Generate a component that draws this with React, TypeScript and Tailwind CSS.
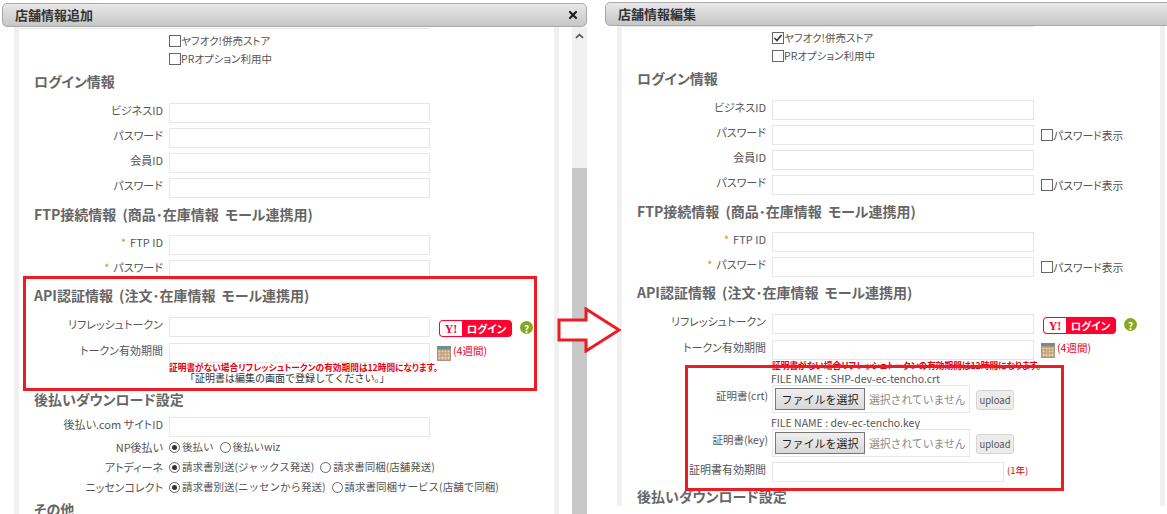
import { ReactNode } from 'react';
import { X } from 'lucide-react';

const INK = 'text-[#555]';

function TitleBar({ title, closable }: { title: string; closable?: boolean }) {
  return (
    <div className="flex h-[24px] shrink-0 items-center justify-between rounded-[5px] border border-[#aaa] bg-gradient-to-b from-[#e8e8e8] to-[#c6c6c6] pl-[12px] pr-[7px]">
      <span className="text-[13px] font-bold text-[#333] [font-feature-settings:normal]">{title}</span>
      {closable && <X size={12} strokeWidth={4.5} className="text-[#222]" />}
    </div>
  );
}

function Heading({ children, className }: { children: ReactNode; className: string }) {
  return (
    <div className={`flex items-center pb-[2px] pl-[15px] text-[14px] font-bold [word-spacing:3px] whitespace-nowrap text-[#666] ${className}`}>
      {children}
    </div>
  );
}

function Box({ checked }: { checked?: boolean }) {
  return (
    <span className="relative inline-block h-[12px] w-[12px] shrink-0 border border-[#666] bg-white">
      {checked && (
        <svg viewBox="0 0 10 10" className="absolute inset-0 h-[10px] w-[10px]">
          <path d="M1.5 5 L4 7.5 L8.5 2" fill="none" stroke="#333" strokeWidth="1.6" />
        </svg>
      )}
    </span>
  );
}

function Radio({ on }: { on?: boolean }) {
  return (
    <span className="grid h-[11px] w-[11px] shrink-0 place-items-center rounded-full border border-[#666] bg-white">
      {on && <span className="h-[5px] w-[5px] rounded-full bg-[#333]" />}
    </span>
  );
}

function Check({ label, checked }: { label: string; checked?: boolean }) {
  return (
    <label className={`flex h-[18px] items-center pl-[150px] text-[10.5px] ${INK}`}>
      <Box checked={checked} />
      {label}
    </label>
  );
}

function Field({ width, className }: { width: string; className?: string }) {
  return <input readOnly className={`h-[20px] shrink-0 border border-[#e6e6e6] bg-white ${width} ${className ?? ''}`} />;
}

function Row({
  label,
  star,
  width,
  height = 'h-[25px]',
  children,
}: {
  label: string;
  star?: boolean;
  width: string;
  height?: string;
  children?: ReactNode;
}) {
  return (
    <div className={`flex items-start ${height}`}>
      <span className={`w-[144px] shrink-0 text-right text-[11px] leading-[15px] whitespace-nowrap ${INK}`}>
        {star && <span className="mr-[4px] text-[#f08a00]">*</span>}
        {label}
      </span>
      <Field width={width} className="ml-[6px]" />
      {children}
    </div>
  );
}

function RadioRow({ label, options }: { label: string; options: string[] }) {
  return (
    <div className={`flex h-[20px] items-center text-[10.5px] whitespace-nowrap ${INK}`}>
      <span className="w-[144px] shrink-0 text-right text-[11px]">{label}</span>
      <span className="ml-[6px] flex items-center gap-[6px] [font-feature-settings:normal]">
        {options.map((o, i) => (
          <span key={o} className="flex items-center gap-[2px]">
            <Radio on={i === 0} />
            {o}
          </span>
        ))}
      </span>
    </div>
  );
}

function ShowPassword() {
  return (
    <label className={`ml-[7px] mt-[2px] flex items-center text-[10.8px] whitespace-nowrap ${INK}`}>
      <Box />
      パスワード表示
    </label>
  );
}

function YahooLogin() {
  return (
    <div className="ml-[9px] mt-[3px] flex h-[17px] w-[73px] shrink-0 items-center overflow-hidden rounded-[4px] border border-[#ff0033] bg-[#ff0033] shadow-[0_0_1px_#f99]">
      <span className="flex h-full w-[22px] items-center justify-center bg-white font-['Liberation_Serif',serif] text-[12px] font-bold text-[#ff0033]">
        Y!
      </span>
      <span className="flex-1 text-center text-[10.5px] font-bold text-white">ログイン</span>
    </div>
  );
}

function HelpDot() {
  return (
    <span className="ml-[8px] mt-[4px] grid h-[13px] w-[13px] shrink-0 place-items-center rounded-full bg-[#86a81e] text-[10px] font-bold text-white">
      ?
    </span>
  );
}

function CalendarIcon() {
  return (
    <svg viewBox="0 0 14 15" className="ml-[7px] mt-[3px] h-[15px] w-[14px] shrink-0">
      <rect x="0" y="0" width="14" height="15" fill="#b39a7c" />
      <rect x="0" y="0" width="14" height="3" fill="#6f8f8f" />
      <path
        d="M1 4h12v10H1z M4 4v10 M7 4v10 M10 4v10 M1 7h12 M1 10h12"
        fill="#e7d3b4"
        stroke="#a98d6b"
        strokeWidth="0.8"
      />
      <rect x="4" y="7" width="3" height="3" fill="#f0a060" />
    </svg>
  );
}

function RedNote({ className }: { className?: string }) {
  return (
    <p className={`h-[10px] pl-[150px] text-[8.7px] leading-[10px] font-bold whitespace-nowrap text-[#e60012] ${className ?? ''}`}>
      証明書がない場合リフレッシュトークンの有効期間は12時間になります。
    </p>
  );
}

function FileRow({ label, name }: { label: string; name: string }) {
  return (
    <div className="flex items-start">
      <span className={`w-[146px] shrink-0 pt-[17px] text-right text-[10.5px] leading-[13px] whitespace-nowrap ${INK}`}>
        {label}
      </span>
      <div className="ml-[3px]">
        <p className={`h-[13px] text-[10.5px] leading-[13px] whitespace-nowrap ${INK}`}>FILE NAME : {name}</p>
        <div className="flex items-start">
          <div className="ml-[1px] flex h-[28px] w-[198px] items-center border border-[#e6e6e6] pl-[2px]">
            <span className="flex h-[22px] w-[90px] items-center justify-center border border-[#777] bg-gradient-to-b from-[#efefef] to-[#d8d8d8] text-[11px] text-[#222] [font-feature-settings:normal]">
              ファイルを選択
            </span>
            <span className="ml-[4px] text-[10.8px] whitespace-nowrap text-[#8a8a8a] [font-feature-settings:normal]">選択されていません</span>
          </div>
          <span className={`ml-[6px] mt-[5px] flex h-[20px] w-[38px] items-center justify-center rounded-[3px] border border-[#d5d5d5] bg-[#ececec] text-[9.5px] ${INK}`}>
            upload
          </span>
        </div>
      </div>
    </div>
  );
}

function Arrow() {
  return (
    <svg viewBox="0 0 64 46" className="absolute left-[557px] top-[307px] h-[46px] w-[64px]">
      <path
        d="M2 13 H29 V2 L62 23 L29 44 V33 H2 Z"
        fill="#fff"
        stroke="#ed1c24"
        strokeWidth="3"
      />
    </svg>
  );
}

function AddForm() {
  return (
    <>
      <div className="h-[2px] w-[411px] border-b border-[#e6e6e6]" />
      <div className="h-[3px]" />
      <Check label="ヤフオク!併売ストア" />
      <Check label="PRオプション利用中" />
      <Heading className="h-[28px]">ログイン情報</Heading>
      <div className="h-[7px]" />
      <Row label="ビジネスID" width="w-[261px]" />
      <Row label="パスワード" width="w-[261px]" />
      <Row label="会員ID" width="w-[261px]" />
      <Row label="パスワード" width="w-[261px]" />
      <Heading className="h-[24px]">FTP接続情報 (商品･在庫情報 モール連携用)</Heading>
      <div className="h-[8px]" />
      <Row label="FTP ID" star width="w-[261px]" />
      <Row label="パスワード" star width="w-[261px]" />
      <Heading className="h-[22px]">API認証情報 (注文･在庫情報 モール連携用)</Heading>
      <div className="h-[10px]" />
      <Row label="リフレッシュトークン" width="w-[261px]" height="h-[26px]">
        <YahooLogin />
        <HelpDot />
      </Row>
      <Row label="トークン有効期間" width="w-[261px]" height="h-[20px]">
        <CalendarIcon />
        <span className="ml-[2px] text-[10.5px] text-[#e60012]">(4週間)</span>
      </Row>
      <RedNote />
      <p className="h-[10px] pl-[166px] text-[10px] leading-[10px] whitespace-nowrap text-[#333] [font-feature-settings:normal]">
        「証明書は編集の画面で登録してください。」
      </p>
      <Heading className="mt-[5px] h-[24px]">後払いダウンロード設定</Heading>
      <div className="h-[5px]" />
      <Row label="後払い.com サイトID" width="w-[261px]" height="h-[20px]" />
      <RadioRow label="NP後払い" options={['後払い', '後払いwiz']} />
      <RadioRow label="アトディーネ" options={['請求書別送(ジャックス発送)', '請求書同梱(店舗発送)']} />
      <RadioRow label="ニッセンコレクト" options={['請求書別送(ニッセンから発送)', '請求書同梱サービス(店舗で同梱)']} />
      <Heading className="h-[26px]">その他</Heading>
    </>
  );
}

function EditForm() {
  return (
    <>
      <div className="h-[1px] w-[412px] border-b border-[#e6e6e6]" />
      <div className="h-[2px]" />
      <Check label="ヤフオク!併売ストア" checked />
      <Check label="PRオプション利用中" />
      <Heading className="h-[28px]">ログイン情報</Heading>
      <div className="h-[7px]" />
      <Row label="ビジネスID" width="w-[262px]" />
      <Row label="パスワード" width="w-[262px]">
        <ShowPassword />
      </Row>
      <Row label="会員ID" width="w-[262px]" />
      <Row label="パスワード" width="w-[262px]">
        <ShowPassword />
      </Row>
      <Heading className="h-[24px]">FTP接続情報 (商品･在庫情報 モール連携用)</Heading>
      <div className="h-[8px]" />
      <Row label="FTP ID" star width="w-[262px]" />
      <Row label="パスワード" star width="w-[262px]">
        <ShowPassword />
      </Row>
      <Heading className="h-[22px]">API認証情報 (注文･在庫情報 モール連携用)</Heading>
      <div className="h-[10px]" />
      <Row label="リフレッシュトークン" width="w-[262px]" height="h-[26px]">
        <YahooLogin />
        <HelpDot />
      </Row>
      <Row label="トークン有効期間" width="w-[262px]" height="h-[20px]">
        <CalendarIcon />
        <span className="ml-[2px] text-[10.5px] text-[#e60012]">(4週間)</span>
      </Row>
      <RedNote className="pt-px" />
      <div className="h-[2px]" />
      <FileRow label="証明書(crt)" name="SHP-dev-ec-tencho.crt" />
      <div className="h-[3px]" />
      <FileRow label="証明書(key)" name="dev-ec-tencho.key" />
      <div className="h-[5px]" />
      <Row label="証明書有効期間" width="w-[232px]" height="h-[20px]">
        <span className="ml-[3px] mt-[1px] text-[9.5px] text-[#e60012]">(1年)</span>
      </Row>
      <Heading className="mt-[3px] h-[24px]">後払いダウンロード設定</Heading>
    </>
  );
}

export default function App() {
  return (
    <div className="relative flex h-[514px] w-[1167px] items-start overflow-hidden bg-white font-['Noto_Sans_CJK_JP','Liberation_Sans',sans-serif] [font-feature-settings:'palt']">
      <section className="ml-[2px] mt-[3px] flex h-[511px] w-[585px] shrink-0 flex-col">
        <TitleBar title="店舗情報追加" closable />
        <div className="flex min-h-0 flex-1">
          <div className="ml-[12px] w-[545px] overflow-hidden border-x-[5px] border-[#f0f0f0]">
            <AddForm />
          </div>
          <div className="ml-[13px] flex w-[15px] flex-col bg-[#f0f0f0]">
            <svg viewBox="0 0 10 6" className="mx-auto mt-[6px] h-[6px] w-[9px]">
              <path d="M1 5 L5 1.5 L9 5" fill="none" stroke="#555" strokeWidth="1.8" />
            </svg>
            <div className="mt-[129px] flex-1 bg-[#c8c8c8]" />
          </div>
        </div>
      </section>
      <section className="ml-[18px] mt-[2px] flex h-[504px] w-[580px] shrink-0 flex-col">
        <TitleBar title="店舗情報編集" />
        <div className="ml-[12px] min-h-0 w-[548px] flex-1 overflow-hidden border-x-[5px] border-[#f0f0f0]">
          <EditForm />
        </div>
      </section>
      <Arrow />
      <div className="absolute left-[23px] top-[276px] h-[115px] w-[514px] border-[3px] border-[#ed1c24]" />
      <div className="absolute left-[685px] top-[365px] h-[126px] w-[379px] border-[3px] border-[#ed1c24]" />
    </div>
  );
}
